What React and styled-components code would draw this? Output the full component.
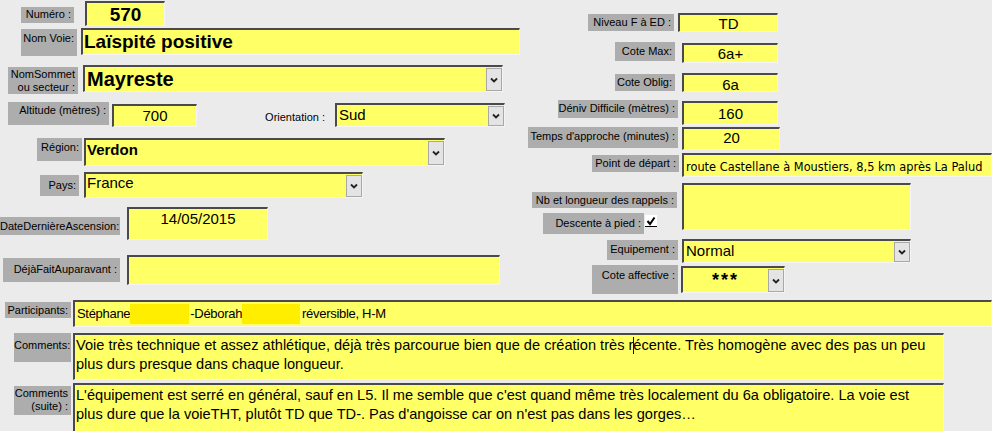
import React from "react";
import styled, { createGlobalStyle } from "styled-components";

const GlobalStyle = createGlobalStyle`
  html, body { margin: 0; padding: 0; background: #ebebeb; }
  body { font-family: "Liberation Sans", Arial, sans-serif; }
  * { box-sizing: border-box; }
`;

const Page = styled.div`
  width: 992px;
  height: 431px;
  overflow: hidden;
  background: #ebebeb;
  display: flex;
  flex-direction: column;
`;

const Top = styled.div`
  display: flex;
  align-items: flex-start;
`;

const LeftCol = styled.div`
  width: 520px;
  display: flex;
  flex-direction: column;
`;

const RightCol = styled.div`
  flex: 1;
  display: flex;
  flex-direction: column;
`;

const Bottom = styled.div`
  display: flex;
  flex-direction: column;
  margin-top: 6px;
`;

const Row = styled.div`
  display: flex;
  align-items: flex-start;
  margin-top: ${(p) => p.$mt || 0}px;
`;

const Label = styled.div`
  flex: none;
  width: ${(p) => p.$w}px;
  height: ${(p) => p.$h}px;
  margin-top: ${(p) => p.$dy || 0}px;
  margin-left: ${(p) => p.$ml || 0}px;
  background: ${(p) => (p.$plain ? "transparent" : "#adadad")};
  color: #000;
  font-family: "Liberation Sans", Arial, sans-serif;
  font-size: 11px;
  line-height: 13px;
  text-align: right;
  padding: ${(p) => (p.$pt ?? 2)}px 3px 0 0;
  white-space: pre;
  overflow: hidden;
`;

const Field = styled.div`
  flex: none;
  position: relative;
  display: flex;
  align-items: ${(p) => (p.$valign === "center" ? "center" : "flex-start")};
  width: ${(p) => p.$w}px;
  height: ${(p) => p.$h}px;
  margin-top: ${(p) => p.$dy || 0}px;
  margin-left: ${(p) => p.$ml || 0}px;
  background: #ffff66;
  border-style: solid;
  border-width: 2px 1px 1px 2px;
  border-color: #4a4a4a #f4f4f4 #f4f4f4 #4a4a4a;
  color: #000;
  overflow: hidden;
`;

const Value = styled.div`
  flex: 1;
  min-width: 0;
  white-space: nowrap;
  overflow: hidden;
  font-family: ${(p) => p.$font || `"Liberation Sans", Arial, sans-serif`};
  font-size: ${(p) => p.$size || 15}px;
  font-weight: ${(p) => (p.$bold ? 700 : 400)};
  line-height: ${(p) => p.$lh || 18}px;
  letter-spacing: ${(p) => p.$ls || 0}px;
  text-align: ${(p) => p.$align || "left"};
  padding: ${(p) => p.$pt || 0}px 2px 0 ${(p) => p.$pl ?? 2}px;
`;

const ArrowBtn = styled.div`
  flex: none;
  align-self: stretch;
  width: 16px;
  margin: 1px 0 0 0;
  background: #e4e4e4;
  border: 1px solid #a8a8a8;
  display: flex;
  align-items: center;
  justify-content: center;
`;

const LabelStack = styled.div`
  flex: none;
  width: 158px;
  display: flex;
  flex-direction: column;
`;

const InlineRow = styled.div`
  display: flex;
  align-items: flex-start;
  margin-top: ${(p) => p.$mt || 0}px;
`;

const Check = styled.div`
  flex: none;
  width: 12px;
  height: 12px;
  margin-top: 2px;
  margin-left: 1px;
  background: #fff;
  border-bottom: 1px solid #000;
  display: flex;
  align-items: center;
  justify-content: center;
`;

const Redact = styled.span`
  display: inline-block;
  width: ${(p) => p.$w}px;
  height: 26px;
  margin: -1px ${(p) => p.$mr || 1}px -6px 0;
  background: #ffee00;
  vertical-align: top;
`;

const Caret = styled.span`
  display: inline-block;
  width: 1px;
  height: 17px;
  margin-right: -1px;
  background: #111;
  vertical-align: -4px;
`;

const Chevron = () => (
  <svg width="8" height="6" viewBox="0 0 8 6">
    <polyline points="1,1.5 4,4.5 7,1.5" fill="none" stroke="#222" strokeWidth="1.8" />
  </svg>
);

const Combo = ({ children, ...rest }) => (
  <Field {...rest}>
    {children}
    <ArrowBtn>
      <Chevron />
    </ArrowBtn>
  </Field>
);

export default function App() {
  return (
    <Page>
      <GlobalStyle />
      <Top>
        <LeftCol>
          <Row $mt={1}>
            <Label $ml={21} $w={53} $h={16} $dy={6} $pt={1}>Numéro :</Label>
            <Field $ml={11} $w={80} $h={25} $valign="center">
              <Value $bold $size={19} $align="center" $lh={21}>570</Value>
            </Field>
          </Row>
          <Row $mt={2}>
            <Label $ml={21} $w={56} $h={27} $dy={1} $pt={3}>Nom Voie:</Label>
            <Field $ml={4} $w={439} $h={27} $valign="center">
              <Value $bold $size={19} $lh={22} $pl={1}>Laïspité positive</Value>
            </Field>
          </Row>
          <Row $mt={9}>
            <Label $ml={8} $w={70} $h={27} $dy={2} $pt={1}>{"NomSommet\nou secteur :"}</Label>
            <Combo $ml={5} $w={420} $h={27} $valign="center">
              <Value $bold $size={20} $lh={23} $pl={2}>Mayreste</Value>
            </Combo>
          </Row>
          <Row $mt={8}>
            <Label $ml={8} $w={101} $h={23} $pt={2}>Altitude (mètres) :</Label>
            <Field $ml={3} $w={85} $h={23} $dy={2}>
              <Value $align="center" $pt={1}>700</Value>
            </Field>
            <Label $plain $w={131} $h={15} $dy={8} $pt={1}>Orientation :</Label>
            <Combo $ml={7} $w={170} $h={24} $dy={1}>
              <Value $pt={1}>Sud</Value>
            </Combo>
          </Row>
          <Row $mt={11}>
            <Label $ml={37} $w={45} $h={23} $pt={3}>Région:</Label>
            <Combo $ml={2} $w={361} $h={28}>
              <Value $bold $pt={1} $pl={1}>Verdon</Value>
            </Combo>
          </Row>
          <Row $mt={6}>
            <Label $ml={40} $w={39} $h={21} $dy={3} $pt={4}>Pays:</Label>
            <Combo $ml={5} $w={279} $h={26}>
              <Value $pt={0} $pl={1}>France</Value>
            </Combo>
          </Row>
          <Row $mt={9}>
            <Label $ml={0} $w={120} $h={18} $dy={10} $pt={3}>DateDernièreAscension:</Label>
            <Field $ml={7} $w={141} $h={33}>
              <Value $align="center" $pt={1}>14/05/2015</Value>
            </Field>
          </Row>
          <Row $mt={15}>
            <Label $ml={3} $w={117} $h={24} $dy={3} $pt={5}>DéjàFaitAuparavant :</Label>
            <Field $ml={7} $w={373} $h={30} />
          </Row>
        </LeftCol>

        <RightCol>
          <Row $mt={13}>
            <Label $ml={68} $w={86} $h={17} $dy={1} $pt={2}>Niveau F à ED :</Label>
            <Field $ml={4} $w={100} $h={19}>
              <Value $align="center" $lh={17}>TD</Value>
            </Field>
          </Row>
          <Row $mt={10}>
            <Label $ml={95} $w={60} $h={19} $pt={3}>Cote Max:</Label>
            <Field $ml={7} $w={96} $h={20} $dy={1}>
              <Value $align="center" $lh={17}>6a+</Value>
            </Field>
          </Row>
          <Row $mt={10}>
            <Label $ml={95} $w={60} $h={17} $dy={1} $pt={2}>Cote Oblig:</Label>
            <Field $ml={7} $w={96} $h={19}>
              <Value $align="center" $lh={19}>6a</Value>
            </Field>
          </Row>
          <Row $mt={8}>
            <Label $ml={38} $w={120} $h={18} $pt={2}>Déniv Difficile (mètres) :</Label>
            <Field $ml={4} $w={96} $h={24} $dy={1}>
              <Value $align="center" $pt={2}>160</Value>
            </Field>
          </Row>
          <Row $mt={2}>
            <Label $ml={8} $w={150} $h={21} $pt={3}>Temps d'approche (minutes) :</Label>
            <Field $ml={4} $w={98} $h={23}>
              <Value $align="center" $pt={0}>20</Value>
            </Field>
          </Row>
          <Row $mt={3}>
            <Label $ml={72} $w={87} $h={17} $dy={2} $pt={2}>Point de départ :</Label>
            <Field $ml={3} $w={310} $h={24}>
              <Value $font={`"DejaVu Sans", Verdana, sans-serif`} $size={11.4} $pt={3} $pl={2}>
                route Castellane à Moustiers, 8,5 km après La Palud
              </Value>
            </Field>
          </Row>
          <Row $mt={6}>
            <LabelStack>
              <Label $ml={12} $w={145} $h={16} $dy={9} $pt={2}>Nb et longueur des rappels :</Label>
              <InlineRow $mt={5}>
                <Label $ml={23} $w={101} $h={21} $pt={4}>Descente à pied :</Label>
                <Check>
                  <svg width="10" height="10" viewBox="0 0 10 10">
                    <polyline points="1.5,5 4,8 8.5,1.5" fill="none" stroke="#000" strokeWidth="2" />
                  </svg>
                </Check>
              </InlineRow>
            </LabelStack>
            <Field $ml={4} $w={229} $h={47} />
          </Row>
          <Row $mt={5}>
            <Label $ml={87} $w={71} $h={20} $dy={1} $pt={3}>Equipement :</Label>
            <Combo $ml={4} $w={229} $h={24}>
              <Value $pt={1} $pl={2}>Normal</Value>
            </Combo>
          </Row>
          <Row $mt={2}>
            <Label $ml={72} $w={86} $h={29} $pt={4}>Cote affective :</Label>
            <Combo $ml={3} $w={104} $h={27} $dy={1}>
              <Value $align="center" $bold $size={18} $ls={2} $pt={3}>***</Value>
            </Combo>
          </Row>
        </RightCol>
      </Top>

      <Bottom>
        <Row>
          <Label $ml={5} $w={66} $h={16} $dy={2} $pt={2}>Participants:</Label>
          <Field $ml={2} $w={919} $h={27}>
            <Value $size={13} $ls={-0.3} $pt={3} $lh={17} $pl={2}>
              Stéphane<Redact $w={59} />-Déborah<Redact $w={58} $mr={2} />réversible, H-M
            </Value>
          </Field>
        </Row>
        <Row $mt={6}>
          <Label $ml={14} $w={57} $h={29} $pt={6}>Comments:</Label>
          <Field $ml={2} $w={871} $h={47}>
            <Value $size={14.6} $pt={1} $lh={19} $pl={1}>
              Voie très technique et assez athlétique, déjà très parcourue bien que de création très r
              <Caret />
              écente. Très homogène avec des pas un peu
              <br />
              plus durs presque dans chaque longueur.
            </Value>
          </Field>
        </Row>
        <Row $mt={3}>
          <Label $ml={14} $w={57} $h={29} $dy={3} $pt={1}>{"Comments\n(suite) :"}</Label>
          <Field $ml={2} $w={871} $h={50}>
            <Value $size={14.6} $pt={1} $lh={19} $pl={1}>
              L'équipement est serré en général, sauf en L5. Il me semble que c'est quand même très localement du 6a obligatoire. La voie est
              <br />
              plus dure que la voieTHT, plutôt TD que TD-. Pas d'angoisse car on n'est pas dans les gorges…
            </Value>
          </Field>
        </Row>
      </Bottom>
    </Page>
  );
}
